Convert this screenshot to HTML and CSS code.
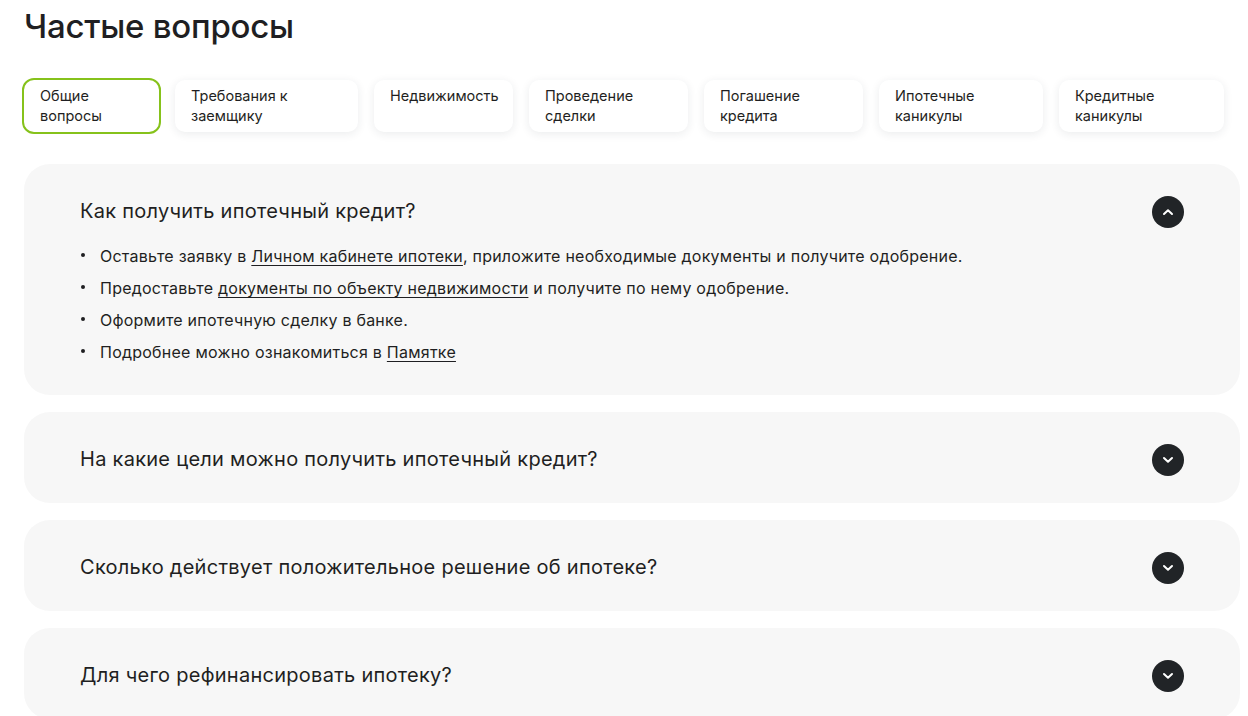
FILE: index.html
```html
<!DOCTYPE html>
<html lang="ru">
<head>
<meta charset="utf-8">
<title>Частые вопросы</title>
<link rel="stylesheet" href="styles.css">
</head>
<body>
<main class="faq">
  <h1 class="faq-title">Частые вопросы</h1>
  <nav class="tabs">
    <button class="tab tab-active">Общие<br>вопросы</button>
    <button class="tab">Требования к<br>заемщику</button>
    <button class="tab">Недвижимость</button>
    <button class="tab">Проведение<br>сделки</button>
    <button class="tab">Погашение<br>кредита</button>
    <button class="tab">Ипотечные<br>каникулы</button>
    <button class="tab">Кредитные<br>каникулы</button>
  </nav>
  <section class="accordion">
    <article class="card">
      <div class="card-head">
        <h2 class="question">Как получить ипотечный кредит?</h2>
        <span class="toggle"><svg width="12" height="8" viewBox="0 0 12 8"><path d="M2 6 L6 2.2 L10 6" fill="none" stroke="#fff" stroke-width="2" stroke-linecap="round" stroke-linejoin="round"/></svg></span>
      </div>
      <ul class="answer">
        <li>Оставьте заявку в <a href="#">Личном кабинете ипотеки</a>, приложите необходимые документы и получите одобрение.</li>
        <li>Предоставьте <a href="#">документы по объекту недвижимости</a> и получите по нему одобрение.</li>
        <li>Оформите ипотечную сделку в банке.</li>
        <li>Подробнее можно ознакомиться в <a href="#">Памятке</a></li>
      </ul>
    </article>
    <article class="card">
      <div class="card-head">
        <h2 class="question">На какие цели можно получить ипотечный кредит?</h2>
        <span class="toggle"><svg width="12" height="8" viewBox="0 0 12 8"><path d="M2 2 L6 5.8 L10 2" fill="none" stroke="#fff" stroke-width="2" stroke-linecap="round" stroke-linejoin="round"/></svg></span>
      </div>
    </article>
    <article class="card">
      <div class="card-head">
        <h2 class="question">Сколько действует положительное решение об ипотеке?</h2>
        <span class="toggle"><svg width="12" height="8" viewBox="0 0 12 8"><path d="M2 2 L6 5.8 L10 2" fill="none" stroke="#fff" stroke-width="2" stroke-linecap="round" stroke-linejoin="round"/></svg></span>
      </div>
    </article>
    <article class="card">
      <div class="card-head">
        <h2 class="question">Для чего рефинансировать ипотеку?</h2>
        <span class="toggle"><svg width="12" height="8" viewBox="0 0 12 8"><path d="M2 2 L6 5.8 L10 2" fill="none" stroke="#fff" stroke-width="2" stroke-linecap="round" stroke-linejoin="round"/></svg></span>
      </div>
    </article>
  </section>
</main>
</body>
</html>
```
FILE: styles.css
```css
* { box-sizing: border-box; }
html, body { margin: 0; padding: 0; background: #fff; }
body {
  font-family: Inter, "Noto Sans", sans-serif;
  color: #1f1f22;
  overflow: hidden;
}
.faq {
  padding: 0 8px 0 24px;
}
.faq-title {
  margin: 0;
  padding-top: 6px;
  font-size: 33px;
  line-height: 40px;
  font-weight: 500;
  letter-spacing: -0.25px;
}
.tabs {
  margin-top: 34px;
  display: grid;
  grid-template-columns: 135px 183px 139px 159px 159px 164px 165px;
  column-gap: 16px;
}
.tab {
  height: 52px;
  padding: 6px 16px;
  border: none;
  border-radius: 10px;
  background: #fff;
  box-shadow: 0 2px 10px rgba(30, 40, 60, 0.09);
  font-family: inherit;
  font-size: 14.5px;
  line-height: 20px;
  color: #1f1f22;
  text-align: left;
  display: flex;
  align-items: flex-start;
}
.tab-active {
  box-shadow: none;
  outline: 2px solid #86c21b;
  outline-offset: 0;
}
.accordion {
  margin-top: 32px;
  display: flex;
  flex-direction: column;
  gap: 17px;
}
.card {
  background: #f7f7f7;
  border-radius: 26px;
  padding: 32px 56px 27px;
}
.card-head {
  display: flex;
  align-items: center;
  justify-content: space-between;
  height: 32px;
}
.question {
  margin: 0;
  margin-top: -2px;
  font-size: 20px;
  line-height: 28px;
  font-weight: 400;
  letter-spacing: 0.27px;
  color: #1f1f22;
}
.toggle {
  width: 32px;
  height: 32px;
  border-radius: 50%;
  background: #212427;
  display: flex;
  align-items: center;
  justify-content: center;
  flex-shrink: 0;
}
.answer {
  list-style: none;
  margin: 12px 0 0;
  padding: 0;
}
.answer li {
  position: relative;
  padding-left: 20px;
  font-size: 16px;
  line-height: 32px;
  letter-spacing: 0.24px;
}
.answer li::before {
  content: "";
  position: absolute;
  left: 1px;
  top: 13px;
  width: 4px;
  height: 4px;
  border-radius: 50%;
  background: #1f1f22;
}
.answer a {
  color: #1f1f22;
  text-decoration: underline;
  text-underline-offset: 3px;
  text-decoration-thickness: 1px;
}
```
